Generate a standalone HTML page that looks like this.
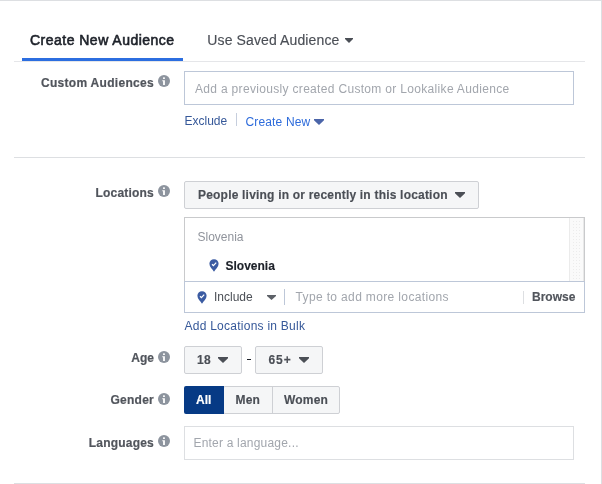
<!DOCTYPE html>
<html><head><meta charset="utf-8">
<style>
html,body{margin:0;padding:0;}
body{width:602px;height:484px;overflow:hidden;background:#fff;position:relative;font-family:"Liberation Sans",sans-serif;}
.a{position:absolute;}
.t{position:absolute;white-space:nowrap;font-size:12px;line-height:12px;}
.b{font-weight:bold;-webkit-text-stroke:0.15px currentColor;}
.lbl{color:#51555c;font-weight:bold;-webkit-text-stroke:0.2px currentColor;text-align:right;right:448px;}
.info{position:absolute;width:12px;height:12px;}
.hl{position:absolute;height:1px;background:#dddfe2;}
.tri{position:absolute;width:0;height:0;border-left:5px solid transparent;border-right:5px solid transparent;border-top:6px solid #4b4f56;}
.btn{position:absolute;box-sizing:border-box;background:#f5f6f7;border:1px solid #ced0d4;border-radius:2px;}
</style></head><body><div id="w" style="position:absolute;left:0;top:0;width:602px;height:484px;will-change:transform">
<!-- frame borders -->
<div class="a" style="left:0;top:0;width:602px;height:1px;background:#dddfe2"></div>
<div class="a" style="left:601px;top:0;width:1px;height:484px;background:#dddfe2"></div>

<!-- tabs -->
<div class="t" style="left:30px;top:33px;font-size:14px;line-height:14px;color:#1d2129;-webkit-text-stroke:0.6px #1d2129;letter-spacing:0.48px">Create New Audience</div>
<div class="t" style="left:207.3px;top:33px;font-size:14px;line-height:14px;color:#4b4f56;letter-spacing:0.12px;-webkit-text-stroke:0.15px #4b4f56">Use Saved Audience</div>
<svg class="a" style="left:345px;top:38px" width="8" height="5" viewBox="0 0 8 5"><path d="M0 0H8V1.00L4.0 5L0 1.00Z" fill="#4b4f56"/></svg>
<div class="a" style="left:22px;top:58px;width:161px;height:3px;background:#2c6ee0"></div>
<div class="hl" style="left:14px;top:61px;width:571px;background:#e5e6e9"></div>

<!-- custom audiences -->
<div class="t lbl" style="top:77px;letter-spacing:0.3px">Custom Audiences</div>
<svg class="info" style="left:158px;top:75px" viewBox="0 0 12 12"><circle cx="6" cy="6" r="6" fill="#8d949e"/><rect x="5.05" y="2.3" width="1.85" height="1.7" rx="0.6" fill="#fff"/><path d="M4.3 5.2H6.9V9.9H5.1V6.3H4.3Z" fill="#fff"/></svg>
<div class="a" style="left:184px;top:71px;width:390px;height:34px;box-sizing:border-box;border:1px solid #bdc7d8"></div>
<div class="t" style="left:195px;top:83px;color:#a2a6ad;letter-spacing:0.32px">Add a previously created Custom or Lookalike Audience</div>
<div class="t" style="left:184.5px;top:115px;color:#365899">Exclude</div>
<div class="a" style="left:236px;top:113px;width:1px;height:13px;background:#c6cedd"></div>
<div class="t" style="left:245.5px;top:116px;color:#2d6bdb;letter-spacing:0.15px">Create New</div>
<svg class="a" style="left:314px;top:119px" width="10" height="6" viewBox="0 0 10 6"><path d="M0 0H10V1.20L5.0 6L0 1.20Z" fill="#4b65a9"/></svg>

<div class="hl" style="left:14px;top:157px;width:571px;"></div>

<!-- locations -->
<div class="t lbl" style="top:187px;letter-spacing:0.2px">Locations</div>
<svg class="info" style="left:158px;top:185px" viewBox="0 0 12 12"><circle cx="6" cy="6" r="6" fill="#8d949e"/><rect x="5.05" y="2.3" width="1.85" height="1.7" rx="0.6" fill="#fff"/><path d="M4.3 5.2H6.9V9.9H5.1V6.3H4.3Z" fill="#fff"/></svg>
<div class="btn" style="left:184px;top:181px;width:295px;height:28px"></div>
<div class="t b" style="left:198px;top:189px;color:#4b4f56;letter-spacing:0.2px">People living in or recently in this location</div>
<svg class="a" style="left:455px;top:192px" width="10" height="6" viewBox="0 0 10 6"><path d="M0 0H10V1.20L5.0 6L0 1.20Z" fill="#4b4f56"/></svg>

<div class="a" style="left:184px;top:217px;width:401px;height:65px;box-sizing:border-box;border:1px solid #c9cacc;border-bottom:none"></div>
<div class="a" style="left:569px;top:218px;width:15px;height:63px;box-sizing:border-box;border-left:1px solid #ebebeb;border-right:1px solid #e8e8e8;background-color:#fafafa"></div><div class="a" style="left:572px;top:220px;width:9px;height:61px;background-image:radial-gradient(circle at 1.5px 1.5px,#ececec 0.7px,transparent 1px);background-size:3px 3px"></div>
<div class="t" style="left:197.5px;top:231px;color:#90949c">Slovenia</div>
<svg class="a" style="left:209px;top:259px" width="10" height="13" viewBox="0 0 10 13"><path d="M5 0.3C2.4 0.3 0.4 2.3 0.4 4.8c0 2.9 3 5.6 4.6 7.9 1.6-2.3 4.6-5 4.6-7.9C9.6 2.3 7.6 0.3 5 0.3z" fill="#3b5ba2"/><path d="M3 5.3l1.4 1.3 2.8-3" stroke="#fff" stroke-width="1.2" fill="none"/></svg>
<div class="t b" style="left:225.5px;top:260px;color:#1d2129">Slovenia</div>

<div class="a" style="left:184px;top:281px;width:401px;height:32px;box-sizing:border-box;border:1px solid #bdc7d8"></div>
<svg class="a" style="left:197px;top:291px" width="10" height="13" viewBox="0 0 10 13"><path d="M5 0.3C2.4 0.3 0.4 2.3 0.4 4.8c0 2.9 3 5.6 4.6 7.9 1.6-2.3 4.6-5 4.6-7.9C9.6 2.3 7.6 0.3 5 0.3z" fill="#3b5ba2"/><path d="M3 5.3l1.4 1.3 2.8-3" stroke="#fff" stroke-width="1.2" fill="none"/></svg>
<div class="t" style="left:214px;top:291px;color:#4b4f56">Include</div>
<svg class="a" style="left:267px;top:295px" width="9" height="5" viewBox="0 0 9 5"><path d="M0 0H9V1.00L4.5 5L0 1.00Z" fill="#5d6168"/></svg>
<div class="a" style="left:284px;top:289px;width:1px;height:16px;background:#bdc7d8"></div>
<div class="t" style="left:295.5px;top:291px;color:#a2a6ad;letter-spacing:0.36px">Type to add more locations</div>
<div class="a" style="left:523px;top:291px;width:1px;height:13px;background:#dddfe2"></div>
<div class="t b" style="left:532px;top:291px;color:#51555c">Browse</div>

<div class="t" style="left:184.5px;top:320px;color:#365899;letter-spacing:0.25px">Add Locations in Bulk</div>

<!-- age -->
<div class="t lbl" style="top:352px">Age</div>
<svg class="info" style="left:158px;top:351px" viewBox="0 0 12 12"><circle cx="6" cy="6" r="6" fill="#8d949e"/><rect x="5.05" y="2.3" width="1.85" height="1.7" rx="0.6" fill="#fff"/><path d="M4.3 5.2H6.9V9.9H5.1V6.3H4.3Z" fill="#fff"/></svg>
<div class="btn" style="left:184px;top:346px;width:58px;height:28px"></div>
<div class="t b" style="left:197px;top:354px;color:#4b4f56;letter-spacing:0.4px">18</div>
<svg class="a" style="left:218px;top:357px" width="10" height="6" viewBox="0 0 10 6"><path d="M0 0H10V1.20L5.0 6L0 1.20Z" fill="#4b4f56"/></svg>
<div class="a" style="left:246.7px;top:358.9px;width:4.1px;height:1.2px;background:#1d2129"></div>
<div class="btn" style="left:255px;top:346px;width:68px;height:28px"></div>
<div class="t b" style="left:268.5px;top:354px;color:#4b4f56;letter-spacing:0.9px">65+</div>
<svg class="a" style="left:299px;top:357px" width="10" height="6" viewBox="0 0 10 6"><path d="M0 0H10V1.20L5.0 6L0 1.20Z" fill="#4b4f56"/></svg>

<!-- gender -->
<div class="t lbl" style="top:394px;letter-spacing:0.25px">Gender</div>
<svg class="info" style="left:158px;top:392.6px" viewBox="0 0 12 12"><circle cx="6" cy="6" r="6" fill="#8d949e"/><rect x="5.05" y="2.3" width="1.85" height="1.7" rx="0.6" fill="#fff"/><path d="M4.3 5.2H6.9V9.9H5.1V6.3H4.3Z" fill="#fff"/></svg>
<div class="btn" style="left:223px;top:386px;width:117px;height:28px"></div>
<div class="a" style="left:272px;top:386px;width:1px;height:28px;background:#ced0d4"></div>
<div class="a" style="left:184px;top:386px;width:40px;height:28px;background:#063a85;border-radius:2px 0 0 2px"></div>
<div class="t b" style="left:196px;top:394px;color:#fff">All</div>
<div class="t b" style="left:235.5px;top:394px;color:#4b4f56;letter-spacing:0.2px">Men</div>
<div class="t b" style="left:284px;top:394px;color:#4b4f56;letter-spacing:0.2px">Women</div>

<!-- languages -->
<div class="t lbl" style="top:437px;letter-spacing:0.2px">Languages</div>
<svg class="info" style="left:158px;top:435px" viewBox="0 0 12 12"><circle cx="6" cy="6" r="6" fill="#8d949e"/><rect x="5.05" y="2.3" width="1.85" height="1.7" rx="0.6" fill="#fff"/><path d="M4.3 5.2H6.9V9.9H5.1V6.3H4.3Z" fill="#fff"/></svg>
<div class="a" style="left:184px;top:426px;width:390px;height:34px;box-sizing:border-box;border:1px solid #dddfe2"></div>
<div class="t" style="left:193.5px;top:437px;color:#a2a6ad;letter-spacing:0.2px">Enter a language...</div>

<div class="hl" style="left:14px;top:483px;width:571px;"></div>
</div></body></html>
